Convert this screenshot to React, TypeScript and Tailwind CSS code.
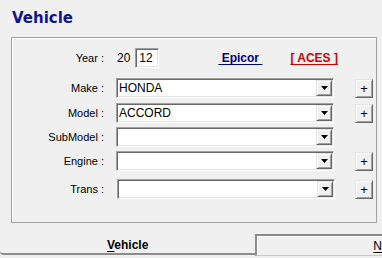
import React from 'react';

const sunken =
  'border border-t-[#a0a0a0] border-l-[#a0a0a0] border-b-white border-r-white shadow-[inset_1px_1px_0_#696969,inset_-1px_-1px_0_#e3e3e3]';
const raised =
  'border border-t-[#e3e3e3] border-l-[#e3e3e3] border-b-[#696969] border-r-[#696969] shadow-[inset_1px_1px_0_#ffffff,inset_-1px_-1px_0_#a0a0a0]';

function Combo({ value = '' }: { value?: string }) {
  return (
    <div className={`flex h-[20px] w-[218px] items-stretch bg-white ${sunken}`}>
      <div className="flex flex-1 items-center pl-[2px] text-[12px] leading-none text-black">{value}</div>
      <div className={`m-[1px] flex w-[16px] items-center justify-center bg-[#f0f0f0] ${raised}`}>
        <svg width="7" height="4" viewBox="0 0 7 4">
          <path d="M0 0h7L3.5 4z" fill="#000" />
        </svg>
      </div>
    </div>
  );
}

function Plus() {
  return (
    <div className={`flex h-[19px] w-[18px] items-center justify-center bg-[#f0f0f0] text-[13px] leading-none text-black ${raised}`}>
      +
    </div>
  );
}

function Row({ label, value, plus, mt, shift }: { label: string; value?: string; plus?: boolean; mt: string; shift?: boolean }) {
  return (
    <div className={`flex items-center ${mt}`}>
      <div className="w-[93px] pr-[1px] text-right text-[11px] leading-none text-black">{label}</div>
      <div className={shift ? 'ml-[12px]' : 'ml-[11px]'}>
        <Combo value={value} />
      </div>
      {plus && (
        <div className={`${shift ? 'ml-[20px]' : 'ml-[21px]'} mt-[1px]`}>
          <Plus />
        </div>
      )}
    </div>
  );
}

export default function App() {
  return (
    <div
      className="flex h-[258px] w-[382px] flex-col overflow-hidden bg-[#f0f0f0]"
      style={{ fontFamily: '"Liberation Sans", Arial, sans-serif' }}
    >
      {/* Title */}
      <div
        className="ml-[12px] mt-[8px] h-[20px] text-[15px] font-bold leading-[20px] text-[#14148a]"
        style={{ fontFamily: '"DejaVu Sans", Verdana, sans-serif' }}
      >
        Vehicle
      </div>

      {/* Group box */}
      <div className="ml-[11px] mt-[9px] flex h-[186px] w-[366px] flex-col border border-[#a0a0a0] shadow-[inset_1px_1px_0_#ffffff]">
        {/* Year */}
        <div className="mt-[10px] flex h-[20px] items-center">
          <div className="w-[93px] pr-[1px] text-right text-[11px] leading-none text-black">Year :</div>
          <div className="ml-[12px] text-[12px] leading-none text-black">20</div>
          <div className={`ml-[5px] flex h-[20px] w-[24px] items-center bg-white pl-[3px] text-[12px] leading-none text-black ${sunken}`}>
            12
          </div>
          <div className="ml-[59px] text-[12px] font-bold leading-none text-[#000080] underline underline-offset-2 whitespace-pre">
            {' Epicor '}
          </div>
          <div className="ml-[28px] text-[12px] font-bold leading-none text-[#d00000] underline underline-offset-2 whitespace-pre">
            {'[ ACES ]'}
          </div>
        </div>

        <Row label="Make :" value="HONDA" plus mt="mt-[10px]" />
        <Row label="Model :" value="ACCORD" plus mt="mt-[5px]" />
        <Row label="SubModel :" mt="mt-[4px]" />
        <Row label="Engine :" plus mt="mt-[4px]" />
        <Row label="Trans :" plus mt="mt-[8px]" shift />
      </div>

      {/* Tabs */}
      <div className="flex flex-1 items-start">
        <div className="mt-[8px] flex h-[24px] w-[258px] items-end justify-center rounded-bl-[4px] border-b-[2px] border-[#8c8c8c] pb-[2px]">
          <span className="text-[12px] font-bold leading-none text-black">
            <span className="underline underline-offset-2">V</span>ehicle
          </span>
        </div>
        <div className="mt-[11px] flex h-[22px] flex-1 items-center border-l-[2px] border-t-[2px] border-b border-[#8c8c8c] border-b-[#c8c8c8] pl-[116px] shadow-[inset_1px_1px_0_#ffffff]">
          <span className="text-[12px] leading-none text-black underline underline-offset-2 whitespace-pre">N</span>
        </div>
      </div>
    </div>
  );
}
